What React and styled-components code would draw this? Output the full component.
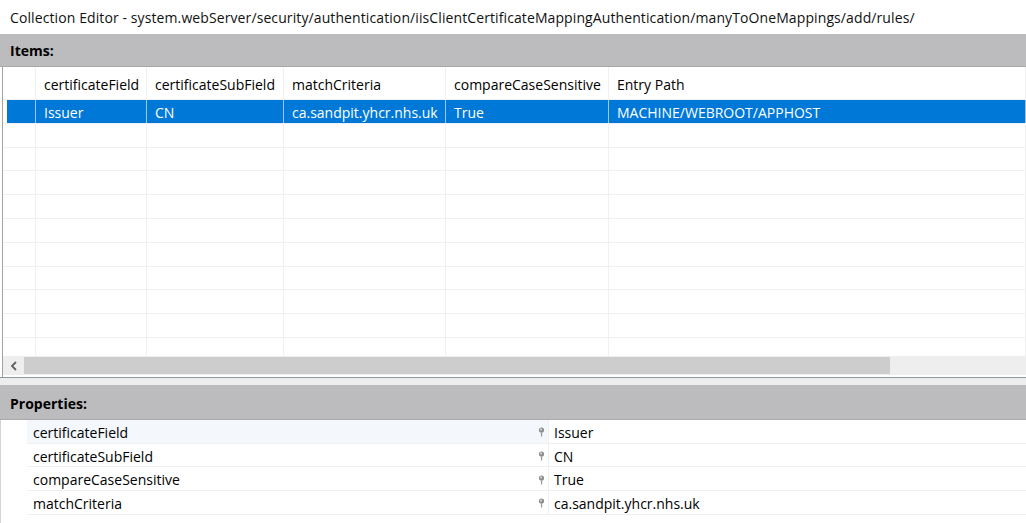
import React from "react";
import styled, { createGlobalStyle } from "styled-components";

const Global = createGlobalStyle`
  html, body { margin: 0; padding: 0; background: #fff; }
  body { font-family: "Segoe UI", "Open Sans", "Noto Sans", sans-serif; font-size: 14px; color: #000; }
  * { box-sizing: border-box; }
`;

const Window = styled.div`
  width: 1026px;
  height: 523px;
  overflow: hidden;
  display: flex;
  flex-direction: column;
  background: #fff;
`;

const TitleBar = styled.div`
  height: 34px;
  flex: none;
  display: flex;
  align-items: center;
  padding: 1px 0 0 10px;
  white-space: nowrap;
  font-size: 14px;
  letter-spacing: 0.1px;
  color: #111;
`;

const SectionHeader = styled.div`
  height: ${(p) => p.$h}px;
  flex: none;
  display: flex;
  align-items: center;
  padding: ${(p) => p.$pt}px 0 0 10px;
  background: #bcbbbd;
  border-bottom: 1px solid #a9a8ab;
  font-weight: 700;
  font-size: 14px;
`;

const ItemsFrame = styled.div`
  flex: none;
  padding-left: 2px;
  border-bottom: 1px solid #8e979e;
`;

const ItemsInner = styled.div`
  border-left: 1px solid #a2a2a2;
  padding-bottom: 2px;
`;

const GridArea = styled.div`
  height: 289px;
  overflow: hidden;
`;

const COLS = "33px 111px 137px 162px 163px 1fr";

const Row = styled.div`
  display: grid;
  grid-template-columns: ${COLS};
  height: ${(p) => p.$h}px;
  border-bottom: 1px solid #f0f0f0;
  white-space: nowrap;
`;

const Cell = styled.div`
  display: flex;
  align-items: center;
  padding: 2px 0 0 8px;
  overflow: hidden;
  color: ${(p) => (p.$sel ? "#fff" : "#000")};
  background: ${(p) => (p.$sel ? "#0078d7" : "transparent")};
  border-right: 1px solid ${(p) => (p.$sel ? "#9fc6ec" : "#f0f0f0")};
`;

const RowHead = styled.div`
  padding-left: 4px;
  background: ${(p) => (p.$sel ? "#0078d7" : "transparent")};
  background-clip: content-box;
  border-right: 1px solid ${(p) => (p.$sel ? "#9fc6ec" : "#f0f0f0")};
`;

const ScrollBar = styled.div`
  height: 19px;
  display: flex;
  background: #eeeeee;
`;

const ScrollBtn = styled.div`
  width: 21px;
  display: flex;
  align-items: center;
  justify-content: center;
`;

const Thumb = styled.div`
  width: 866px;
  margin: 1px 0;
  background: #cdcdcd;
`;

const Gap = styled.div`
  height: 7px;
  background: #ededed;
  flex: none;
`;

const PropList = styled.div`
  border-left: 1px solid #d4d4d4;
  flex: 1;
`;

const PropRow = styled.div`
  display: grid;
  grid-template-columns: 26px 522px 1fr;
  height: 23.7px;
`;

const PropName = styled.div`
  display: flex;
  align-items: center;
  justify-content: space-between;
  padding: 2px 3px 0 6px;
  background: ${(p) => (p.$hl ? "#f4f7fc" : "#fff")};
  border-bottom: 1px solid #f0f0f3;
  border-right: 1px solid #f0f0f3;
`;

const PropValue = styled.div`
  display: flex;
  align-items: center;
  padding: 2px 0 0 5px;
  border-bottom: 1px solid #f0f0f3;
`;

const Arrow = () => (
  <svg width="8" height="10" viewBox="0 0 8 10">
    <path d="M6 1 L2 5 L6 9" fill="none" stroke="#606060" strokeWidth="1.8" />
  </svg>
);

const PinIcon = () => (
  <svg width="7" height="10" viewBox="0 0 7 10">
    <circle cx="3.5" cy="3" r="2.6" fill="#8e8e8e" />
    <circle cx="3" cy="2.4" r="1" fill="#dcdcdc" />
    <rect x="2.9" y="5.2" width="1.3" height="4.3" fill="#9c9c9c" />
  </svg>
);

const headers = ["certificateField", "certificateSubField", "matchCriteria", "compareCaseSensitive", "Entry Path"];
const selected = ["Issuer", "CN", "ca.sandpit.yhcr.nhs.uk", "True", "MACHINE/WEBROOT/APPHOST"];
const props = [
  ["certificateField", "Issuer"],
  ["certificateSubField", "CN"],
  ["compareCaseSensitive", "True"],
  ["matchCriteria", "ca.sandpit.yhcr.nhs.uk"],
];

export default function App() {
  return (
    <>
      <Global />
      <Window>
        <TitleBar>
          Collection Editor - system.webServer/security/authentication/iisClientCertificateMappingAuthentication/manyToOneMappings/add/rules/
        </TitleBar>
        <SectionHeader $h={33} $pt={0}>Items:</SectionHeader>
        <ItemsFrame>
          <ItemsInner>
            <GridArea>
              <Row $h={33}>
                <RowHead />
                {headers.map((h) => (
                  <Cell key={h}>{h}</Cell>
                ))}
              </Row>
              <Row $h={23.8}>
                <RowHead $sel />
                {selected.map((v) => (
                  <Cell key={v} $sel>
                    {v}
                  </Cell>
                ))}
              </Row>
              {Array.from({ length: 11 }).map((_, i) => (
                <Row key={i} $h={23.8}>
                  <RowHead />
                  {headers.map((h) => (
                    <Cell key={h} />
                  ))}
                </Row>
              ))}
            </GridArea>
            <ScrollBar>
              <ScrollBtn>
                <Arrow />
              </ScrollBtn>
              <Thumb />
            </ScrollBar>
          </ItemsInner>
        </ItemsFrame>
        <Gap />
        <SectionHeader $h={35} $pt={2}>Properties:</SectionHeader>
        <PropList>
          {props.map(([n, v], i) => (
            <PropRow key={n}>
              <div />
              <PropName $hl={i === 0}>
                <span>{n}</span>
                <PinIcon />
              </PropName>
              <PropValue>{v}</PropValue>
            </PropRow>
          ))}
        </PropList>
      </Window>
    </>
  );
}
